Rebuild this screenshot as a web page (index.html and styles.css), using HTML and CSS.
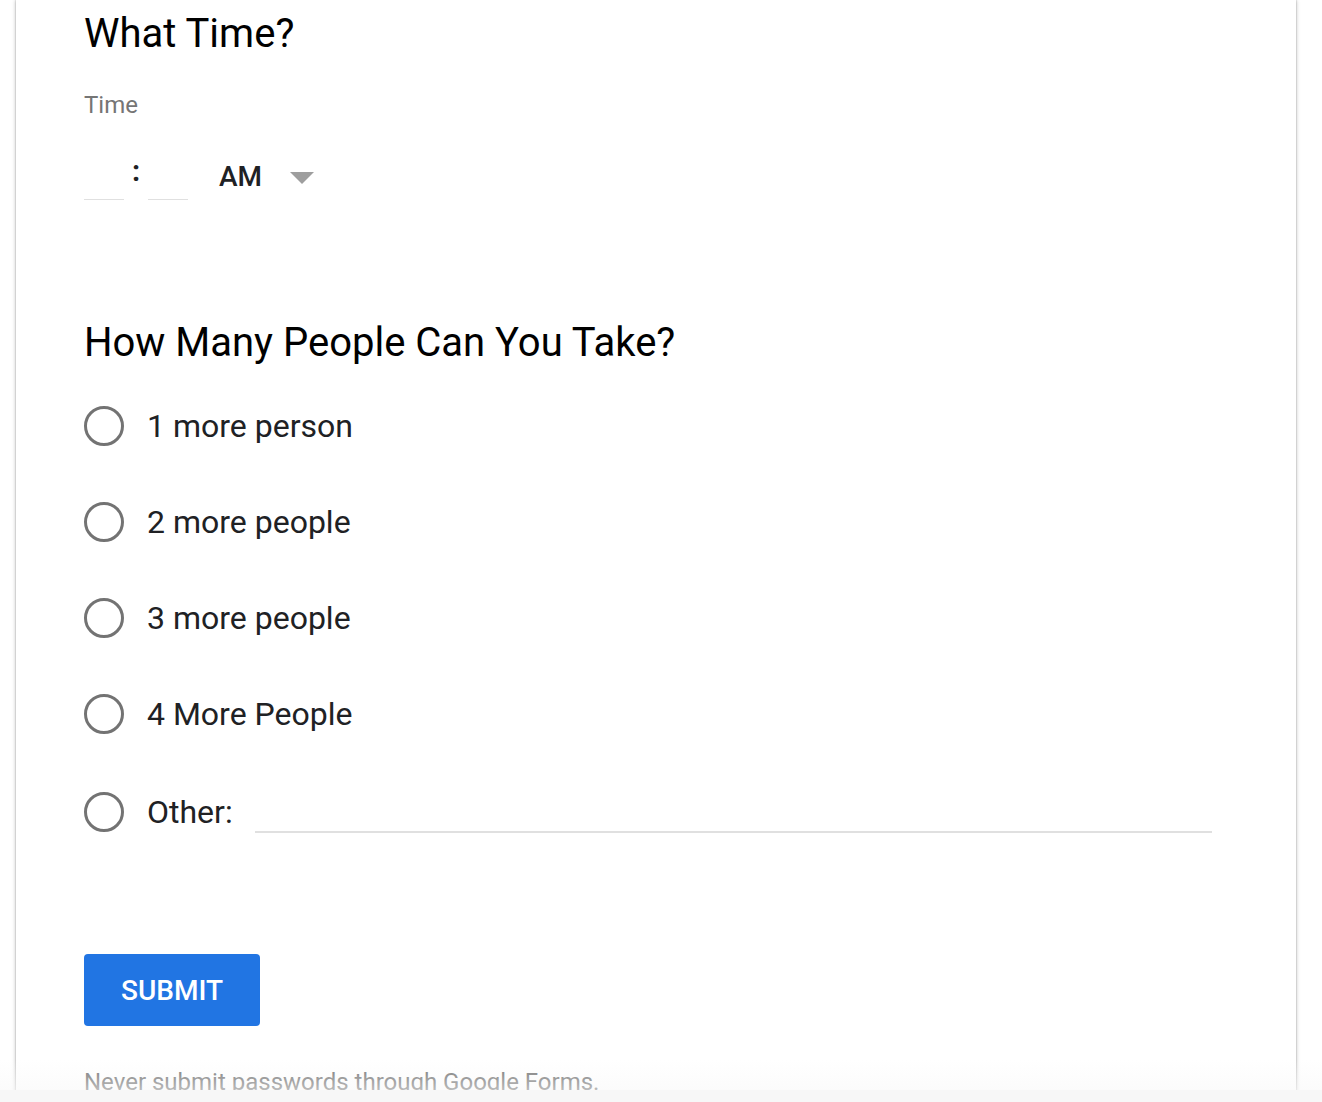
FILE: index.html
```html
<!DOCTYPE html>
<html lang="en">
<head>
<meta charset="utf-8">
<title>Form</title>
<link rel="stylesheet" href="styles.css">
</head>
<body>
<div class="viewport">
  <div class="card">
    <h1 class="q-title">What Time?</h1>
    <div class="q-label">Time</div>
    <div class="time-row">
      <span class="time-input"></span>
      <span class="colon">:</span>
      <span class="time-input"></span>
      <span class="ampm">AM</span>
      <span class="caret"></span>
    </div>

    <h1 class="q-title q-second">How Many People Can You Take?</h1>
    <div class="options">
      <div class="option"><span class="radio"></span><span class="opt-text">1 more person</span></div>
      <div class="option"><span class="radio"></span><span class="opt-text">2 more people</span></div>
      <div class="option"><span class="radio"></span><span class="opt-text">3 more people</span></div>
      <div class="option"><span class="radio"></span><span class="opt-text">4 More People</span></div>
      <div class="option option-other"><span class="radio"></span><span class="opt-text">Other:</span><span class="other-line"></span></div>
    </div>

    <button class="submit">SUBMIT</button>
    <p class="footer-note">Never submit passwords through Google Forms.</p>
  </div>
  <div class="fade"></div>
</div>
<div class="bottom-strip"></div>
</body>
</html>
```

FILE: styles.css
```css
html, body {
  margin: 0;
  padding: 0;
  background: #ffffff;
  font-family: Roboto, "Noto Sans", Arial, sans-serif;
  color: #202124;
}

.viewport {
  position: relative;
  height: 1090px;
  overflow: hidden;
}

.card {
  margin-left: 16px;
  width: 1280px;
  min-height: 1200px;
  box-sizing: border-box;
  padding: 0 84px 0 68px;
  background: #ffffff;
  box-shadow: 0 0 4px rgba(0, 0, 0, 0.3), 0 0 1px rgba(0, 0, 0, 0.35);
}

.q-title {
  margin: 0;
  padding-top: 2px;
  font-size: 40px;
  font-weight: 400;
  line-height: 64px;
  color: #000000;
}

.q-label {
  margin-top: 24px;
  font-size: 24px;
  line-height: 30px;
  color: #757575;
}

.time-row {
  margin-top: 38px;
  height: 42px;
  display: flex;
  align-items: flex-end;
}

.time-input {
  width: 40px;
  height: 41px;
  border-bottom: 1px solid #e0e0e0;
}

.colon {
  width: 24px;
  text-align: center;
  font-size: 29px;
  font-weight: 700;
  line-height: 42px;
  align-self: flex-start;
  margin-top: -8px;
  color: #202124;
}

.ampm {
  margin-left: 31px;
  font-size: 28px;
  font-weight: 500;
  line-height: 42px;
  align-self: flex-start;
  margin-top: -2px;
  color: #202124;
}

.caret {
  margin-left: 28px;
  align-self: flex-start;
  margin-top: 14px;
  width: 0;
  height: 0;
  border-left: 12px solid transparent;
  border-right: 12px solid transparent;
  border-top: 12px solid #9e9e9e;
}

.q-second {
  margin-top: 109px;
}

.options {
  margin-top: 3px;
}

.option {
  height: 96px;
  display: flex;
  align-items: center;
}

.option-other {
  height: 100px;
}

.radio {
  width: 34px;
  height: 34px;
  border: 3px solid #737373;
  border-radius: 50%;
  flex: none;
}

.opt-text {
  margin-left: 23px;
  font-size: 32px;
  line-height: 40px;
  color: #202124;
}

.other-line {
  margin-left: 22px;
  flex: 1;
  align-self: flex-start;
  margin-top: 69px;
  height: 0;
  border-bottom: 2px solid #e0e0e0;
}

.submit {
  display: block;
  margin-top: 92px;
  width: 176px;
  height: 72px;
  border: none;
  border-radius: 4px;
  background: #2175e3;
  color: #ffffff;
  font-family: Roboto, "Noto Sans", Arial, sans-serif;
  font-size: 28px;
  font-weight: 500;
  padding: 0;
}

.footer-note {
  margin: 40px 0 0 0;
  font-size: 24px;
  line-height: 32px;
  color: #6f6f6f;
}

.fade {
  position: absolute;
  left: 0;
  right: 0;
  bottom: 0;
  height: 30px;
  background: linear-gradient(rgba(250, 250, 250, 0), rgba(248, 248, 248, 0.55));
  pointer-events: none;
}

.bottom-strip {
  height: 12px;
  background: #f7f7f7;
}
```
